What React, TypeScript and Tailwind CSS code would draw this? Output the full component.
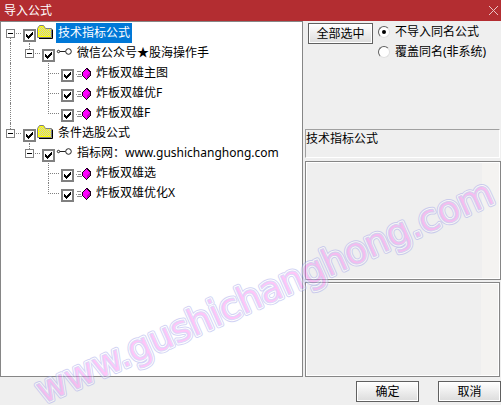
import { useState } from 'react';

type Guide = 'line' | 'blank' | 'tee' | 'end' | 'first' | 'last' | 'child';
type Kind = 'folder' | 'link' | 'formula';

interface TreeItem {
  id: string;
  label: string;
  kind: Kind;
  guides: Guide[];
}

const items: TreeItem[] = [
  { id: 'tech', label: '技术指标公式', kind: 'folder', guides: ['first'] },
  { id: 'wechat', label: '微信公众号★股海操作手', kind: 'link', guides: ['line', 'child'] },
  { id: 'main', label: '炸板双雄主图', kind: 'formula', guides: ['line', 'blank', 'tee'] },
  { id: 'bestF', label: '炸板双雄优F', kind: 'formula', guides: ['line', 'blank', 'tee'] },
  { id: 'f', label: '炸板双雄F', kind: 'formula', guides: ['line', 'blank', 'end'] },
  { id: 'pick', label: '条件选股公式', kind: 'folder', guides: ['last'] },
  { id: 'site', label: '指标网：www.gushichanghong.com', kind: 'link', guides: ['blank', 'child'] },
  { id: 'select', label: '炸板双雄选', kind: 'formula', guides: ['blank', 'blank', 'tee'] },
  { id: 'bestX', label: '炸板双雄优化X', kind: 'formula', guides: ['blank', 'blank', 'end'] },
];

const GuideCell = ({ type, label }: { type: Guide; label: string }) => {
  if (type === 'blank') return <span className="w-[19px] shrink-0" />;
  if (type === 'line') {
    return (
      <span className="flex w-[19px] shrink-0 pl-[9px]">
        <span className="border-l border-dotted border-[#808080]" />
      </span>
    );
  }
  if (type === 'tee' || type === 'end') {
    return (
      <span className="flex w-[22px] shrink-0 pl-[9px] pr-[2px]">
        <span className="flex flex-1 flex-col">
          <span className="h-[11px] border-b border-l border-dotted border-[#808080]" />
          {type === 'tee' && <span className="flex-1 border-l border-dotted border-[#808080]" />}
        </span>
      </span>
    );
  }
  return (
    <span className="flex w-[22px] shrink-0 pl-[5px]">
      <span className="flex w-[9px] flex-col items-center">
        <span className={`h-[6px] border-dotted border-[#808080] ${type === 'first' ? '' : 'border-l'}`} />
        <button
          type="button"
          aria-label={`折叠 ${label}`}
          className="flex size-[9px] items-center justify-center border border-[#808080] bg-white"
        >
          <span className="h-px w-[5px] bg-black" />
        </button>
        <span className={`flex-1 border-dotted border-[#808080] ${type === 'first' ? 'border-l' : ''}`} />
      </span>
      <span className="mt-[10px] mr-[2px] ml-px h-px flex-1 border-t border-dotted border-[#808080]" />
    </span>
  );
};

const FolderIcon = () => (
  <svg className="mt-[2px] h-[14px] w-4" viewBox="0 0 16 14">
    <path d="M2 13.5h13.5V4.5" fill="none" stroke="#000" />
    <path d="M.5 12.5v-9l2-3h4l2 3h6v9z" fill="#ffff00" stroke="#808080" />
    <path
      d="M3 2h1v1H3zM5 2h1v1H5zM2 3h1v1H2zM4 3h1v1H4zM6 3h1v1H6zM3 4h1v1H3zM5 4h1v1H5zM7 4h1v1H7zM9 4h1v1H9zM11 4h1v1h-1zM13 4h1v1h-1zM2 5h1v1H2zM4 5h1v1H4zM6 5h1v1H6zM8 5h1v1H8zM10 5h1v1h-1zM12 5h1v1h-1zM3 6h1v1H3zM5 6h1v1H5zM7 6h1v1H7zM9 6h1v1H9zM11 6h1v1h-1zM13 6h1v1h-1zM2 7h1v1H2zM4 7h1v1H4zM6 7h1v1H6zM8 7h1v1H8zM10 7h1v1h-1zM12 7h1v1h-1zM3 8h1v1H3zM5 8h1v1H5zM7 8h1v1H7zM9 8h1v1H9zM11 8h1v1h-1zM13 8h1v1h-1zM2 9h1v1H2zM4 9h1v1H4zM6 9h1v1H6zM8 9h1v1H8zM10 9h1v1h-1zM12 9h1v1h-1zM3 10h1v1H3zM5 10h1v1H5zM7 10h1v1H7zM9 10h1v1H9zM11 10h1v1h-1zM13 10h1v1h-1z"
      fill="#c8c8c8"
    />
  </svg>
);

const LinkIcon = () => (
  <svg className="mt-[4px] h-3 w-4" viewBox="0 0 16 12" fill="none" stroke="#202020">
    <circle cx="2.5" cy="4.5" r="1.2" />
    <path d="M4 4.5h5.5" />
    <circle cx="12.5" cy="4.5" r="2.8" />
  </svg>
);

const FormulaIcon = () => (
  <svg className="mt-[5px] h-3 w-4" viewBox="0 0 16 12" shapeRendering="crispEdges">
    <path d="M2 3.5h4M1 6.5h1M3 6.5h3M2 8.5h5" stroke="#909090" />
    <path d="M11 0h2v1h1v1h1v1h1v5h-1v1h-1v1h-1v1h-1v1h-1v-1h-1v-1H9V9H8V8H7V4h1V3h1V2h1V1h1z" fill="#200020" />
    <path d="M11 1h1v1h1v1h1v1h1v1h-1v1h-1v1h-1v4h-1v-1h-1V9H9V8H8V4h1V3h1V2h1z" fill="#ff00ff" />
    <path d="M12 7h1V6h1V5h1v3h-1v1h-1v1h-1z" fill="#c000c0" />
  </svg>
);

const icons = { folder: FolderIcon, link: LinkIcon, formula: FormulaIcon };

const TreeRow = ({ item, selected, onSelect }: { item: TreeItem; selected: boolean; onSelect: () => void }) => {
  const Icon = icons[item.kind];
  return (
    <li className="flex h-5">
      {item.guides.map((guide, index) => (
        <GuideCell key={index} type={guide} label={item.label} />
      ))}
      <span className="mt-[6px] grid size-[13px] shrink-0">
        <input
          id={item.id}
          type="checkbox"
          defaultChecked
          className="peer col-start-1 row-start-1 size-[13px] appearance-none border-2 border-[#808080] bg-white"
        />
        <svg
          className="pointer-events-none invisible col-start-1 row-start-1 size-[13px] peer-checked:visible"
          viewBox="0 0 13 13"
          shapeRendering="crispEdges"
        >
          <path d="M3 5h1v1h1v1h1V6h1V5h1V4h1V3h1v3H9v1H8v1H7v1H6v1H5V9H4V8H3z" fill="#000" />
        </svg>
      </span>
      <span className="ml-px w-4 shrink-0">
        <Icon />
      </span>
      <label
        htmlFor={item.id}
        onClick={onSelect}
        className={`ml-[3px] px-[2px] whitespace-nowrap leading-5 ${selected ? 'bg-[#0078d7] text-white' : ''}`}
      >
        {item.label}
      </label>
    </li>
  );
};

const PushButton = ({ children, className }: { children: string; className: string }) => (
  <button
    type="button"
    className={`h-[21px] border border-[#606060] bg-linear-to-b from-white to-[#dcdcdc] text-center leading-[18px] ring-1 ring-white ring-inset ${className}`}
  >
    {children}
  </button>
);

const Choice = ({ label, checked }: { label: string; checked?: boolean }) => (
  <label className="flex h-5 items-center gap-[5px] whitespace-nowrap">
    <span className="grid size-3 shrink-0 place-items-center">
      <input
        type="radio"
        name="same-name"
        defaultChecked={checked}
        className="peer col-start-1 row-start-1 size-3 appearance-none rounded-full border border-t-[#606060] border-r-[#e0e0e0] border-b-[#e0e0e0] border-l-[#606060] bg-white"
      />
      <span className="pointer-events-none invisible col-start-1 row-start-1 size-1 rounded-full bg-black peer-checked:visible" />
    </span>
    {label}
  </label>
);

const NotePanel = ({ label, className }: { label: string; className: string }) => (
  <div className={`flex border border-[#868686] bg-white p-px ${className}`}>
    <textarea readOnly aria-label={label} className="min-w-0 flex-1 resize-none bg-[#efefef] outline-none" />
    <span className="w-[17px] bg-[#f4f3f1]" />
  </div>
);

const Watermark = () => (
  <svg className="pointer-events-none absolute inset-0 size-full overflow-visible" aria-hidden="true">
    <defs>
      <text id="mark" transform="translate(43 404) rotate(-24)" className="font-[family-name:'DejaVu_Sans',sans-serif] text-[37px]">
        www.gushichanghong.com
      </text>
    </defs>
    <g strokeLinejoin="round" opacity="0.45">
      <use href="#mark" fill="#9ca0e8" stroke="#9ca0e8" strokeWidth="5" />
      <use href="#mark" fill="#ffffff" stroke="#ffffff" strokeWidth="3" />
      <use href="#mark" fill="#ff80f0" stroke="#b8a8f0" strokeWidth="1" />
    </g>
  </svg>
);

export default function App() {
  const [selected, setSelected] = useState('tech');

  return (
    <div className="relative overflow-hidden bg-[#efefef] font-['Noto_Sans','Noto_Sans_CJK_SC',sans-serif] text-[12px] text-black">
      <header className="flex h-[21px] items-center justify-between bg-[#b32d31] pl-1 pr-[3px] text-white">
        <h1>导入公式</h1>
        <button type="button" aria-label="关闭">
          <svg className="size-[9px]" viewBox="0 0 9 9" stroke="#e8c4c4" fill="none">
            <path d="M0 0l9 9M9 0L0 9" />
          </svg>
        </button>
      </header>

      <main className="grid grid-cols-[minmax(0,1fr)_196px] gap-[2px]">
        <ul className="overflow-hidden border border-[#868686] bg-white pt-px">
          {items.map((item) => (
            <TreeRow
              key={item.id}
              item={item}
              selected={selected === item.id}
              onSelect={() => setSelected(item.id)}
            />
          ))}
        </ul>

        <section className="flex flex-col">
          <div className="flex h-[108px] items-start gap-[5px] pl-[3px]">
            <PushButton className="mt-[2px] w-[65px]">全部选中</PushButton>
            <fieldset className="pt-px">
              <Choice label="不导入同名公式" checked />
              <Choice label="覆盖同名(非系统)" />
            </fieldset>
          </div>
          <output className="mr-px h-[29px] border border-t-[#a0a0a0] border-r-white border-b-white border-l-[#a0a0a0] leading-[18px]">
            技术指标公式
          </output>
          <NotePanel label="公式说明" className="mt-[3px] h-[119px]" />
          <NotePanel label="公式备注" className="mt-[2px] mr-px h-[95px]" />
        </section>
      </main>

      <footer className="flex justify-end gap-[19px] pt-1 pb-[3px]">
        <PushButton className="w-[63px]">确定</PushButton>
        <PushButton className="w-[63px]">取消</PushButton>
      </footer>

      <Watermark />
    </div>
  );
}
